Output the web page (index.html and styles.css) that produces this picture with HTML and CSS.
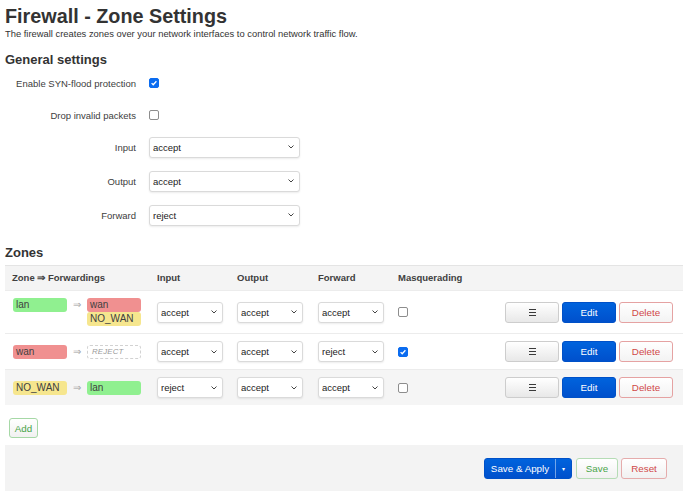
FILE: index.html
```html
<!DOCTYPE html>
<html>
<head>
<meta charset="utf-8">
<title>Firewall - Zone Settings</title>
<link rel="stylesheet" href="styles.css">
</head>
<body>
<div class="page">
  <h2 class="title">Firewall - Zone Settings</h2>
  <p class="desc">The firewall creates zones over your network interfaces to control network traffic flow.</p>

  <h3 class="section">General settings</h3>
  <div class="form">
    <div class="frow cb">
      <label class="flabel">Enable SYN-flood protection</label>
      <div class="fval"><input type="checkbox" class="chk" checked></div>
    </div>
    <div class="frow cb">
      <label class="flabel">Drop invalid packets</label>
      <div class="fval"><input type="checkbox" class="chk"></div>
    </div>
    <div class="frow">
      <label class="flabel">Input</label>
      <div class="fval"><select class="sel wide"><option>accept</option></select></div>
    </div>
    <div class="frow">
      <label class="flabel">Output</label>
      <div class="fval"><select class="sel wide"><option>accept</option></select></div>
    </div>
    <div class="frow">
      <label class="flabel">Forward</label>
      <div class="fval"><select class="sel wide"><option>reject</option></select></div>
    </div>
  </div>

  <h3 class="section zones">Zones</h3>
  <table class="ztable">
    <colgroup>
      <col class="c1"><col class="c2"><col class="c3"><col class="c4"><col class="c5"><col>
    </colgroup>
    <thead>
      <tr>
        <th>Zone ⇒ Forwardings</th>
        <th>Input</th>
        <th>Output</th>
        <th>Forward</th>
        <th>Masquerading</th>
        <th></th>
      </tr>
    </thead>
    <tbody>
      <tr>
        <td class="zcell">
          <div class="fwd">
            <span class="zb lan">lan</span>
            <span class="arr">⇒</span>
            <div class="dests">
              <span class="zb wan">wan</span>
              <span class="zb nowan">NO_WAN</span>
            </div>
          </div>
        </td>
        <td><select class="sel"><option>accept</option></select></td>
        <td><select class="sel"><option>accept</option></select></td>
        <td><select class="sel"><option>accept</option></select></td>
        <td><input type="checkbox" class="chk"></td>
        <td class="acts">
          <div class="btns">
            <button class="btn"><svg class="menu" width="7" height="7" viewBox="0 0 7 7"><path d="M0 0.5h7M0 3.5h7M0 6.5h7" stroke="#3a3a3a" stroke-width="1"/></svg></button>
            <button class="btn edit">Edit</button>
            <button class="btn del">Delete</button>
          </div>
        </td>
      </tr>
      <tr>
        <td class="zcell">
          <div class="fwd">
            <span class="zb wan">wan</span>
            <span class="arr">⇒</span>
            <span class="zb rej">REJECT</span>
          </div>
        </td>
        <td><select class="sel"><option>accept</option></select></td>
        <td><select class="sel"><option>accept</option></select></td>
        <td><select class="sel"><option>reject</option></select></td>
        <td><input type="checkbox" class="chk" checked></td>
        <td class="acts">
          <div class="btns">
            <button class="btn"><svg class="menu" width="7" height="7" viewBox="0 0 7 7"><path d="M0 0.5h7M0 3.5h7M0 6.5h7" stroke="#3a3a3a" stroke-width="1"/></svg></button>
            <button class="btn edit">Edit</button>
            <button class="btn del">Delete</button>
          </div>
        </td>
      </tr>
      <tr class="alt">
        <td class="zcell">
          <div class="fwd">
            <span class="zb nowan">NO_WAN</span>
            <span class="arr">⇒</span>
            <span class="zb lan">lan</span>
          </div>
        </td>
        <td><select class="sel"><option>reject</option></select></td>
        <td><select class="sel"><option>accept</option></select></td>
        <td><select class="sel"><option>accept</option></select></td>
        <td><input type="checkbox" class="chk"></td>
        <td class="acts">
          <div class="btns">
            <button class="btn"><svg class="menu" width="7" height="7" viewBox="0 0 7 7"><path d="M0 0.5h7M0 3.5h7M0 6.5h7" stroke="#3a3a3a" stroke-width="1"/></svg></button>
            <button class="btn edit">Edit</button>
            <button class="btn del">Delete</button>
          </div>
        </td>
      </tr>
    </tbody>
  </table>

  <button class="btn add">Add</button>

  <div class="actions">
    <div class="split">
      <button class="sa-main">Save &amp; Apply</button>
      <button class="sa-drop">▾</button>
    </div>
    <button class="btn save">Save</button>
    <button class="btn reset">Reset</button>
  </div>
</div>
</body>
</html>
```

FILE: styles.css
```css
* { box-sizing: border-box; }
html, body { margin: 0; background: #fff; }
body {
  font-family: "Liberation Sans", Arial, sans-serif;
  font-size: 9.5px;
  color: #404040;
}
.page { padding: 5px 6px 0 5px; }

.title {
  margin: 0;
  font-size: 19.8px;
  line-height: 23px;
  font-weight: bold;
  color: #333;
}
.desc {
  margin: 0;
  font-size: 9.4px;
  line-height: 11px;
  color: #333;
}
.section {
  margin: 13px 0 0;
  font-size: 13px;
  line-height: 15px;
  font-weight: bold;
  color: #333;
}
.section.zones { margin-top: 19.5px; }

.form { margin-top: 5.5px; }
.frow {
  display: flex;
  align-items: center;
  height: 21px;
  margin-bottom: 13px;
}
.frow.cb { margin-bottom: 11px; }
.frow:last-child { margin-bottom: 0; }
.flabel { width: 131px; text-align: right; color: #404040; }
.fval { margin-left: 13px; display: flex; align-items: center; }

.chk {
  -webkit-appearance: none;
  appearance: none;
  margin: 0;
  width: 10px;
  height: 10px;
  border: 1px solid #8d8d8d;
  border-radius: 2px;
  background: #fff;
  display: block;
}
.chk:checked {
  background: #0b6cf0 url("data:image/svg+xml,%3Csvg xmlns='http://www.w3.org/2000/svg' viewBox='0 0 10 10'%3E%3Cpath d='M2 5.2l2 2 4-4.4' fill='none' stroke='white' stroke-width='1.6'/%3E%3C/svg%3E") center/100% 100% no-repeat;
  border-color: #0b6cf0;
}

.sel {
  -webkit-appearance: none;
  appearance: none;
  margin: 0;
  height: 21px;
  width: 66px;
  padding: 0 12px 0 3px;
  font-family: inherit;
  font-size: 9.5px;
  color: #222;
  border: 1px solid #dadada;
  border-radius: 3px;
  box-shadow: 0 1px 2px rgba(0,0,0,0.08);
  background: #fff url("data:image/svg+xml,%3Csvg xmlns='http://www.w3.org/2000/svg' viewBox='0 0 6 4'%3E%3Cpath d='M0.5 0.5l2.5 2.5 2.5-2.5' fill='none' stroke='%23444' stroke-width='1'/%3E%3C/svg%3E") right 5px center/6px 4px no-repeat;
}
.sel.wide { width: 151px; }

.ztable {
  width: 100%;
  border-collapse: collapse;
  table-layout: fixed;
  margin-top: 5px;
}
.ztable col.c1 { width: 145px; }
.ztable col.c2 { width: 80px; }
.ztable col.c3 { width: 81px; }
.ztable col.c4 { width: 80px; }
.ztable col.c5 { width: 100px; }
.ztable th {
  background: #f4f4f4;
  text-align: left;
  font-weight: bold;
  padding: 6px 7px;
  line-height: 12px;
  border-top: 1px solid #e4e4e4;
  color: #404040;
  white-space: nowrap;
}
.ztable td {
  padding: 7px 7px;
  border-top: 1px solid #ececec;
  vertical-align: middle;
}
.ztable tr.alt td { background: #f5f5f5; }
.ztable td.zcell { padding-left: 8px; }
.ztable td.acts { padding-right: 10px; }

.fwd { display: flex; align-items: flex-start; }
.dests { display: flex; flex-direction: column; }
.zb {
  display: block;
  width: 54px;
  height: 14px;
  line-height: 14px;
  padding-left: 3px;
  border-radius: 3px;
  color: #404040;
  white-space: nowrap;
  font-size: 10px;
}
.zb.lan { background: #90f090; }
.zb.wan { background: #f09090; }
.zb.nowan { background: #f6e68e; }
.zb.rej {
  border: 1px dashed #d2d2d2;
  background: #fff;
  font-style: italic;
  font-size: 7.8px;
  line-height: 12px;
  color: #9a9a9a;
  padding-left: 4px;
  letter-spacing: 0.2px;
}
.arr {
  width: 20px;
  text-align: center;
  color: #a0a0a0;
  line-height: 14px;
  font-size: 10px;
}

.btns { display: flex; justify-content: flex-end; gap: 3px; }
.btn {
  height: 21px;
  width: 54px;
  margin: 0;
  padding: 0;
  border: 1px solid #cdcdcd;
  border-radius: 3px;
  background: linear-gradient(#ffffff, #e8e8e8);
  font-family: inherit;
  font-size: 9.8px;
  color: #333;
  display: inline-flex;
  align-items: center;
  justify-content: center;
}
.btn .menu { display: block; }
.btn.edit {
  background: linear-gradient(#0063dd, #0050cc);
  border-color: #0051c8;
  color: #fff;
}
.btn.del {
  background: linear-gradient(#ffffff, #f3f3f3);
  border-color: #e5a2a2;
  color: #d04848;
}
.btn.add {
  display: flex;
  width: 29px;
  height: 20px;
  margin: 13px 0 7px 4px;
  background: linear-gradient(#ffffff, #f1f1f1);
  border-color: #a6d8a6;
  color: #47a447;
}

.actions {
  height: 46px;
  background: #f3f3f3;
  display: flex;
  justify-content: flex-end;
  align-items: center;
  padding-right: 16px;
}
.split {
  display: flex;
  height: 21px;
  border-radius: 3px;
  overflow: hidden;
  background: linear-gradient(#0063dd, #0050cc);
  border: 1px solid #0051c8;
  margin-right: 4px;
}
.split button {
  margin: 0;
  padding: 0;
  border: 0;
  background: transparent;
  color: #fff;
  font-family: inherit;
  font-size: 9.8px;
  height: 100%;
}
.sa-main { width: 70px; }
.split .sa-drop {
  width: 16px;
  border-left: 1px solid rgba(255,255,255,0.45);
  font-size: 6px;
}
.btn.save {
  width: 42px;
  margin-right: 3px;
  background: linear-gradient(#ffffff, #f1f1f1);
  border-color: #b5dcb5;
  color: #4aa54a;
}
.btn.reset {
  width: 46px;
  background: linear-gradient(#ffffff, #f1f1f1);
  border-color: #e5acac;
  color: #d04848;
}
```
